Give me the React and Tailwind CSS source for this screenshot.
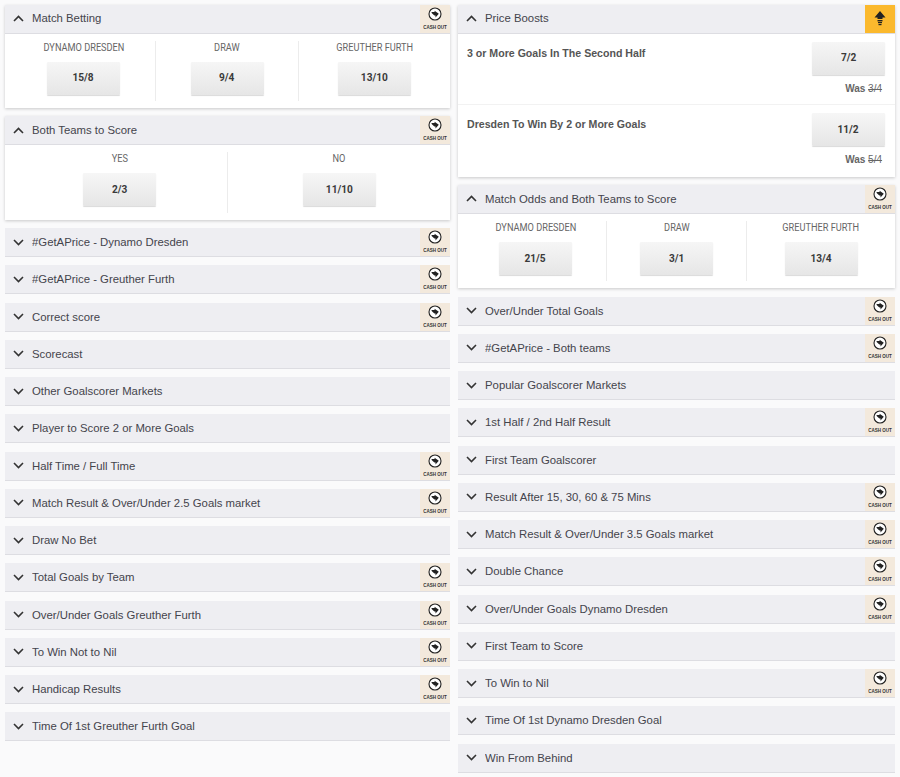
import React from "react";

function Chevron({ up }) {
  return (
    <svg width="11" height="7" viewBox="0 0 11 7" className="shrink-0" fill="none" stroke="#333" strokeWidth="1.6">
      {up ? <path d="M1 6l4.5-4.5L10 6" /> : <path d="M1 1l4.5 4.500L10 1" />}
    </svg>
  );
}

function CashOut() {
  return (
    <div className="w-[30px] h-[28px] bg-[#f3e9dc] flex flex-col items-center shrink-0">
      <svg width="14" height="14" viewBox="0 0 14 14" className="mt-[2px]">
        <circle cx="7" cy="7" r="6" fill="#fff" stroke="#222" strokeWidth="1.1" />
        <path d="M3.2 5.4c1.200-.5 2.300-.5 3.400-.3V3.700L10.800 6.800 7.500 10.400V8.500C6.200 8.500 5 7.500 3.200 5.400z" fill="#222" />
      </svg>
      <span className="text-[5px] leading-[6px] font-bold text-[#333] mt-[3px] whitespace-nowrap scale-x-90">CASH OUT</span>
    </div>
  );
}

function Header({ title, open, cash, boost }) {
  return (
    <div className="h-[29px] bg-[#eeeef2] border-b border-[#dddde2] flex items-center">
      <div className="w-[27px] pl-[8px] flex items-center">
        <Chevron up={open} />
      </div>
      <span className="flex-1 text-[11.350px] text-[#44444c] truncate pt-[1px]">{title}</span>
      {cash && <CashOut />}
      {boost && (
        <div className="w-[30px] h-[28px] bg-[#fbb92d] flex items-center justify-center">
          <svg width="12" height="15" viewBox="0 0 12 15" fill="#222">
            <path d="M6 0l5.500 6.500H8.500V8h-5V6.500H.5z" />
            <rect x="3.500" y="9" width="5" height="1.400" />
            <rect x="4" y="11" width="4" height="1.200" />
            <rect x="4.500" y="13" width="3" height="1.200" />
          </svg>
        </div>
      )}
    </div>
  );
}

function OddBtn({ v }) {
  return (
    <div className="w-[73px] h-[33px] bg-gradient-to-b from-[#f6f6f6] to-[#e6e6e6] shadow-[0_1px_1px_rgba(0,0,0,0.15)] rounded-[1px] flex items-center justify-center text-[11.500px] font-bold text-[#3a3a3a] font-['Roboto',sans-serif]">
      <span className="scale-x-[0.88]">{v}</span>
    </div>
  );
}

function Market({ title, cols, widths }) {
  return (
    <div className="shadow-[0_1px_3px_rgba(0,0,0,0.2)] bg-white">
      <Header title={title} open cash />
      <div className="h-[74.500px] flex py-[7px]">
        {cols.map((c, i) => (
          <div key={c[0]} style={{ width: widths[i] }} className={`flex flex-col items-center ${i === 0 ? "pl-[7px]" : ""} ${i < cols.length - 1 ? "border-r border-[#ececec]" : ""}`}>
            <span className="text-[10px] leading-[14px] text-[#666] font-['Roboto',sans-serif] whitespace-nowrap scale-x-[0.92]">{c[0]}</span>
            <div className="mt-[7px]"><OddBtn v={c[1]} /></div>
          </div>
        ))}
      </div>
    </div>
  );
}

function Boost({ title, odd, was, last }) {
  return (
    <div className={`h-[71.500px] flex justify-between pl-[9px] pr-[10px] pt-[8px] ${last ? "" : "border-b border-[#f2f2f2]"}`}>
      <span className="text-[10.600px] font-bold text-[#555] mt-[4px]">{title}</span>
      <div className="flex flex-col items-end">
        <OddBtn v={odd} />
        <div className="mt-[6px] text-[10px] font-semibold text-[#666] pr-[3px]">
          Was <span className="line-through font-normal">{was}</span>
        </div>
      </div>
    </div>
  );
}

function Row({ title, cash }) {
  return <Header title={title} cash={cash} />;
}

const left = [
  ["#GetAPrice - Dynamo Dresden", 1],
  ["#GetAPrice - Greuther Furth", 1],
  ["Correct score", 1],
  ["Scorecast", 0],
  ["Other Goalscorer Markets", 0],
  ["Player to Score 2 or More Goals", 0],
  ["Half Time / Full Time", 1],
  ["Match Result & Over/Under 2.5 Goals market", 1],
  ["Draw No Bet", 0],
  ["Total Goals by Team", 1],
  ["Over/Under Goals Greuther Furth", 1],
  ["To Win Not to Nil", 1],
  ["Handicap Results", 1],
  ["Time Of 1st Greuther Furth Goal", 0],
];

const right = [
  ["Over/Under Total Goals", 1],
  ["#GetAPrice - Both teams", 1],
  ["Popular Goalscorer Markets", 0],
  ["1st Half / 2nd Half Result", 1],
  ["First Team Goalscorer", 0],
  ["Result After 15, 30, 60 & 75 Mins", 1],
  ["Match Result & Over/Under 3.5 Goals market", 1],
  ["Double Chance", 1],
  ["Over/Under Goals Dynamo Dresden", 1],
  ["First Team to Score", 0],
  ["To Win to Nil", 1],
  ["Time Of 1st Dynamo Dresden Goal", 0],
  ["Win From Behind", 0],
];

export default function App() {
  return (
    <div className="w-[900px] h-[777px] overflow-hidden bg-[#fafafb] flex pt-[4.500px] pl-[5px] font-['Liberation_Sans',sans-serif]">
      <div className="w-[445px] flex flex-col gap-[8.270px] shrink-0">
        <Market title="Match Betting" widths={[151, 143, 151]} cols={[["DYNAMO DRESDEN", "15/8"], ["DRAW", "9/4"], ["GREUTHER FURTH", "13/10"]]} />
        <Market title="Both Teams to Score" widths={[223, 222]} cols={[["YES", "2/3"], ["NO", "11/10"]]} />
        {left.map(([t, c]) => <Row key={t} title={t} cash={!!c} />)}
      </div>
      <div className="w-[437px] ml-[8px] flex flex-col gap-[8.270px] shrink-0">
        <div className="shadow-[0_1px_3px_rgba(0,0,0,0.2)] bg-white">
          <Header title="Price Boosts" open boost />
          <Boost title="3 or More Goals In The Second Half" odd="7/2" was="3/4" />
          <Boost title="Dresden To Win By 2 or More Goals" odd="11/2" was="5/4" last />
        </div>
        <Market title="Match Odds and Both Teams to Score" widths={[149, 140, 148]} cols={[["DYNAMO DRESDEN", "21/5"], ["DRAW", "3/1"], ["GREUTHER FURTH", "13/4"]]} />
        {right.map(([t, c]) => <Row key={t} title={t} cash={!!c} />)}
      </div>
    </div>
  );
}
